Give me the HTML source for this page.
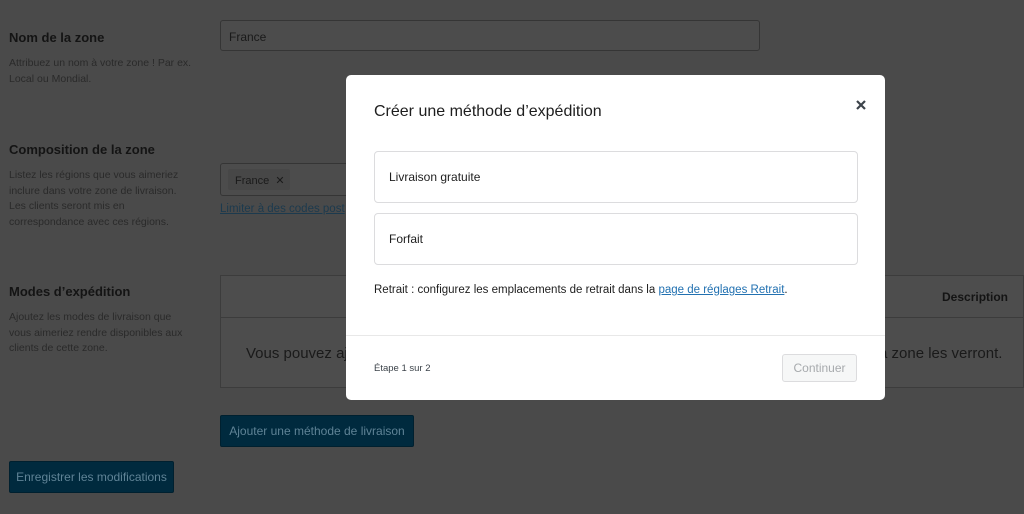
<!DOCTYPE html>
<html><head><meta charset="utf-8"><style>
*{box-sizing:border-box;margin:0;padding:0}
body{width:1024px;height:514px;overflow:hidden;background:#4a4a4a;font-family:"Liberation Sans",sans-serif;position:relative;color:#1a1a1a}
.a{position:absolute}
h3{font-size:13px;font-weight:bold;color:#141414}
.d{font-size:10.5px;line-height:15.5px;color:#2a2a2a}
.inp{border:1px solid #353535;border-radius:3px;background:#4c4c4c}
.btn{background:#002a3e;color:#5f8396;font-size:12px;border-radius:2px;border:1px solid #00202f;text-align:center;white-space:nowrap}
.opt{position:absolute;left:28px;width:484px;height:52px;border:1px solid #dcdcde;border-radius:4px;font-size:12px;padding-left:14px;line-height:50px;color:#1e1e1e}
</style></head><body>
<h3 class="a" style="left:9px;top:30px">Nom de la zone</h3>
<div class="a d" style="left:9px;top:56px;width:185px">Attribuez un nom à votre zone ! Par ex. Local ou Mondial.</div>
<div class="a inp" style="left:220px;top:20px;width:540px;height:31px;font-size:12px;padding:9px 8px;color:#1a1a1a">France</div>

<h3 class="a" style="left:9px;top:142px">Composition de la zone</h3>
<div class="a d" style="left:9px;top:168px;width:185px">Listez les régions que vous aimeriez inclure dans votre zone de livraison. Les clients seront mis en correspondance avec ces régions.</div>
<div class="a inp" style="left:220px;top:163px;width:200px;height:33px"></div>
<div class="a" style="left:228px;top:169px;width:62px;height:21px;background:#474747;border-radius:2px;font-size:11px;padding:5px 7px;color:#1a1a1a;white-space:nowrap">France&nbsp; ✕</div>
<div class="a" style="left:220px;top:203px;font-size:11.5px;color:#1c3a4e;text-decoration:underline">Limiter à des codes post</div>

<h3 class="a" style="left:9px;top:284px">Modes d’expédition</h3>
<div class="a d" style="left:9px;top:310px;width:185px">Ajoutez les modes de livraison que vous aimeriez rendre disponibles aux clients de cette zone.</div>
<div class="a" style="left:220px;top:275px;width:804px;height:113px;border:1px solid #3c3c3c;background:#4d4d4d"></div>
<div class="a" style="left:220px;top:317px;width:804px;height:1px;background:#3c3c3c"></div>
<div class="a" style="left:942px;top:290px;font-size:12px;font-weight:bold;color:#141414">Description</div>
<div class="a" style="left:246px;top:345px;font-size:15px;color:#1a1a1a">Vous pouvez aj</div>
<div class="a" style="left:879px;top:345px;font-size:15px;color:#1a1a1a">a zone les verront.</div>
<div class="a btn" style="left:220px;top:415px;width:194px;height:32px;line-height:30px">Ajouter une méthode de livraison</div>
<div class="a btn" style="left:9px;top:461px;width:165px;height:32px;line-height:30px">Enregistrer les modifications</div>

<div class="a" style="left:346px;top:75px;width:539px;height:325px;background:#fff;border-radius:5px">
 <div class="a" style="left:28px;top:28px;font-size:16px;color:#1e1e1e">Créer une méthode d’expédition</div>
 <svg class="a" style="left:509px;top:24px" width="12" height="12" viewBox="0 0 12 12"><path d="M2 2L10 10M10 2L2 10" stroke="#3c434a" stroke-width="2.2"/></svg>
 <div class="opt" style="top:76px">Livraison gratuite</div>
 <div class="opt" style="top:138px">Forfait</div>
 <div class="a" style="left:28px;top:209px;font-size:11.5px;color:#1e1e1e">Retrait : configurez les emplacements de retrait dans la <span style="color:#2271b1;text-decoration:underline">page de réglages Retrait</span>.</div>
 <div class="a" style="left:0;top:260px;width:539px;height:1px;background:#e8e8e8"></div>
 <div class="a" style="left:28px;top:288px;font-size:9.5px;color:#3c434a">Étape 1 sur 2</div>
 <div class="a" style="left:436px;top:279px;width:75px;height:28px;border:1px solid #dcdcde;border-radius:3px;background:#f6f7f7;color:#a7aaad;font-size:12px;text-align:center;line-height:26px">Continuer</div>
</div>
</body></html>
